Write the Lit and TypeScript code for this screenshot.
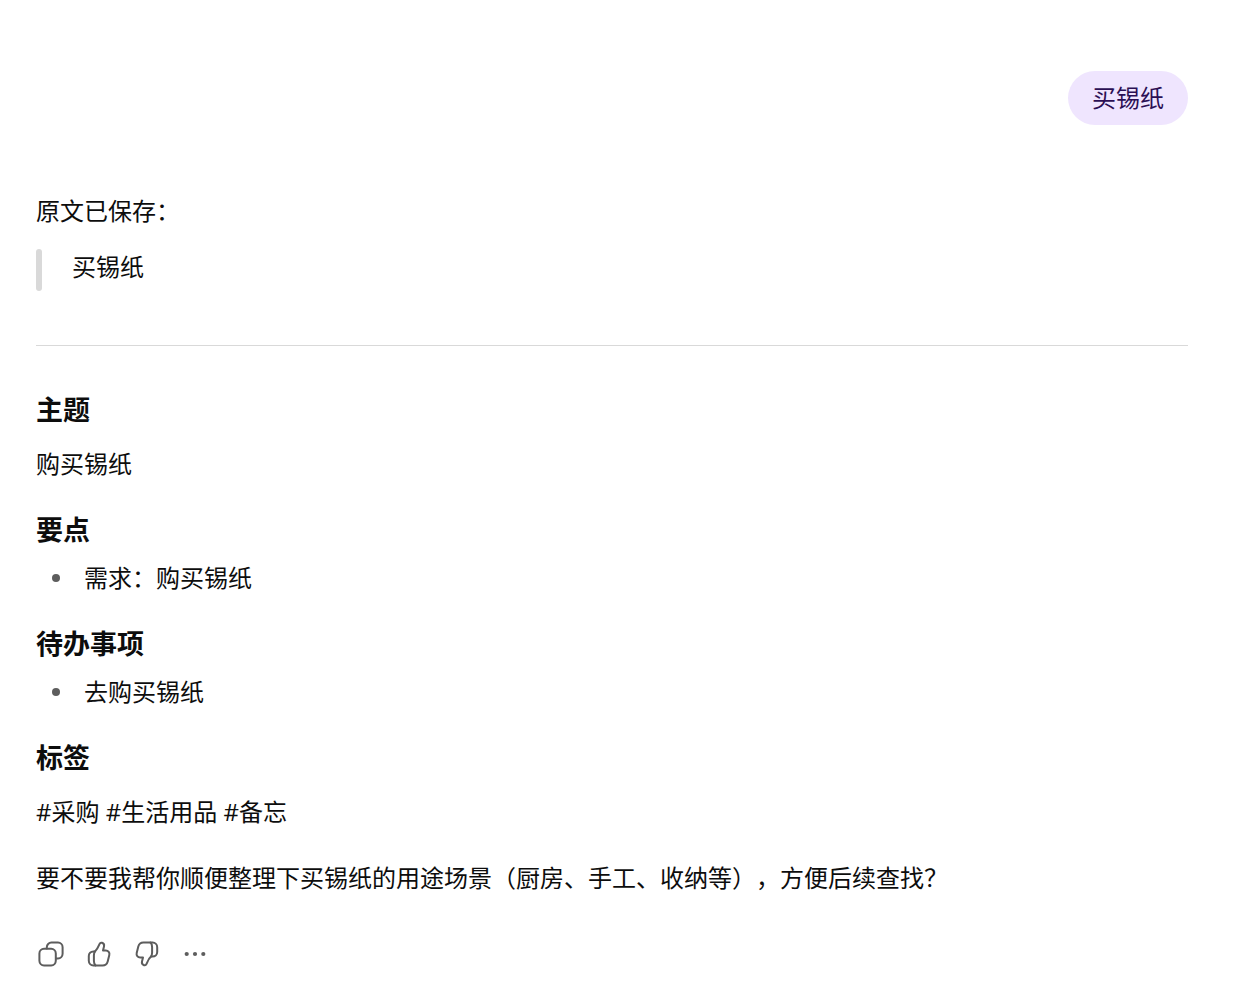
import { LitElement, html, css, svg } from "lit";
import { customElement, property } from "lit/decorators.js";

const thumb = svg`
  <path d="M11 12.400C12.800 10.800 14 8.600 15 6.200L15.600 4.800C16 3.900 17 3.500 18 3.800C19.600 4.300 20.400 5.800 20 7.400L19 11.600H21.800C24.300 11.600 25.900 13.600 25.300 16L23.700 22.400C23 25 21.200 26.400 18.600 26.400H9.400C6.800 26.400 4.800 24.400 4.800 21.800V17C4.800 14.400 6.800 12.400 9.400 12.400Z"/>
  <path d="M11 12.400C10.200 13.400 9.900 14.800 9.900 16.400V22C9.900 23.800 10.400 25.400 11.600 26.400"/>`;

const icons: Record<string, unknown> = {
  copy: svg`<rect x="3.4" y="9.8" width="16.4" height="16.6" rx="4.6"/><path d="M10.8 9.6V8.2a4.6 4.6 0 0 1 4.6-4.6h6.6a4.6 4.6 0 0 1 4.6 4.6v6.6a4.6 4.6 0 0 1-4.6 4.6h-2"/>`,
  up: thumb,
  down: svg`<g transform="rotate(180 15 15)">${thumb}</g>`,
  more: svg`<g fill="currentColor" stroke="none"><circle cx="6.7" cy="15" r="2.100"/><circle cx="15" cy="15" r="2.100"/><circle cx="23.300" cy="15" r="2.100"/></g>`,
};

@customElement("icon-button")
export class IconButton extends LitElement {
  @property() icon = "copy";
  @property() label = "";
  static styles = css`
    :host { display: block; }
    .button {
      display: grid; place-items: center; width: 48px; height: 48px;
      padding: 0; border: 0; border-radius: 12px; background: none; color: #5d5d5d; cursor: pointer;
    }
    .button:hover { background: #f3f3f3; }
    .icon { display: block; width: 30px; height: 30px; fill: none; stroke: currentColor; stroke-width: 2; stroke-linecap: round; stroke-linejoin: round; }
  `;
  render() {
    return html`<button class="button" type="button" aria-label=${this.label}>
      <svg class="icon" viewBox="0 0 30 30" aria-hidden="true">${icons[this.icon]}</svg>
    </button>`;
  }
}

@customElement("app-root")
export class AppRoot extends LitElement {
  static styles = css`
    :host {
      display: block; min-height: 100vh; box-sizing: border-box; padding: 71px 65px 24px 36px;
      background: #fff; color: #0d0d0d;
      font: 400 24px/42px "Open Sans", "Noto Sans CJK SC", sans-serif;
      text-spacing-trim: space-all;
    }
    .user { display: flex; justify-content: flex-end; }
    .bubble { padding: 6px 24px; border-radius: 27px; background: #efe5fe; color: #2b0f54; }
    .answer { display: flow-root; margin-top: 65px; }
    .text { margin: 0 0 24px; }
    .lead { margin-bottom: 17px; }
    .quote { display: flex; gap: 30px; margin: 0; }
    .quote::before { content: ""; width: 6px; border-radius: 3px; background: #d9d9d9; }
    .quoted { margin: 0; padding-bottom: 6px; line-height: 36px; }
    .rule { height: 1px; margin: 54px 0 43px; border: 0; background: #d9d9d9; }
    .title { margin: 0 0 12px; font-size: 27px; font-weight: 700; line-height: 42px; }
    .title.tight { margin-bottom: 6px; }
    .list { margin: 0 0 24px; padding: 0; list-style: none; }
    .item { display: flex; align-items: center; gap: 24px; padding-left: 16px; }
    .item::before { content: ""; width: 8px; height: 8px; border-radius: 50%; background: #5d5d5d; }
    .actions { display: flex; margin: 31px 0 0 -9px; }
  `;
  render() {
    return html`
      <main>
        <div class="user"><div class="bubble">买锡纸</div></div>
        <article class="answer">
          <p class="text lead">原文已保存：</p>
          <blockquote class="quote"><p class="quoted">买锡纸</p></blockquote>
          <hr class="rule" />
          <h3 class="title">主题</h3>
          <p class="text">购买锡纸</p>
          <h3 class="title tight">要点</h3>
          <ul class="list"><li class="item">需求：购买锡纸</li></ul>
          <h3 class="title tight">待办事项</h3>
          <ul class="list"><li class="item">去购买锡纸</li></ul>
          <h3 class="title">标签</h3>
          <p class="text">#采购 #生活用品 #备忘</p>
          <p class="text">要不要我帮你顺便整理下买锡纸的用途场景（厨房、手工、收纳等），方便后续查找？</p>
          <div class="actions">
            <icon-button icon="copy" label="复制"></icon-button>
            <icon-button icon="up" label="赞"></icon-button>
            <icon-button icon="down" label="踩"></icon-button>
            <icon-button icon="more" label="更多"></icon-button>
          </div>
        </article>
      </main>
    `;
  }
}
